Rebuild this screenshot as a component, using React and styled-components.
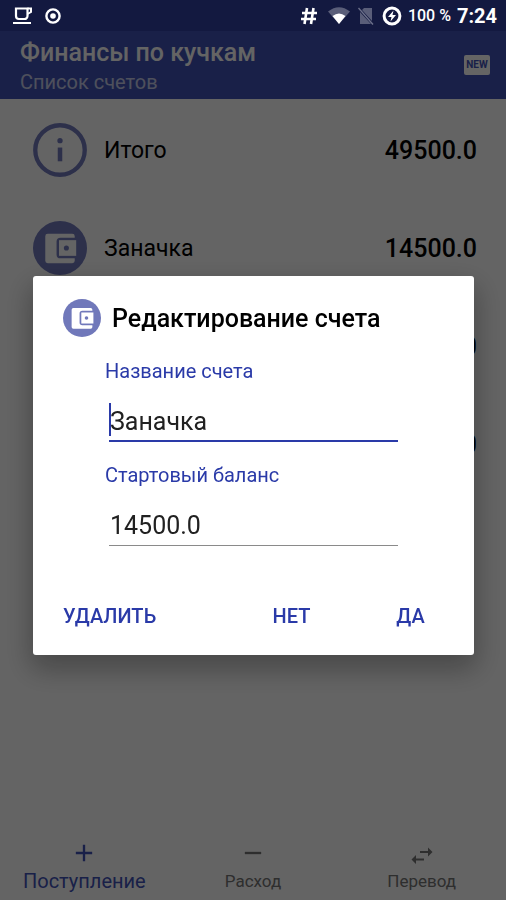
import React, { useState } from 'react'
import styled, { createGlobalStyle } from 'styled-components'
import { MdAdd, MdRemove } from 'react-icons/md'

const GlobalStyle = createGlobalStyle`
  * {
    box-sizing: border-box;
  }
  body {
    margin: 0;
    background: #fafafa;
    color: #000;
    font-family: Roboto, 'Noto Sans', sans-serif;
  }
  button,
  input {
    font-family: inherit;
  }
  svg {
    display: block;
    flex: none;
  }
`

const Page = styled.div`
  display: flex;
  flex-direction: column;
  min-height: 100vh;
`

const StatusBar = styled.div`
  position: relative;
  z-index: 2;
  display: flex;
  gap: 6px;
  height: 31px;
  padding: 0 9px 0 12px;
  background: #131940;
  color: #fff;
`

const StatusGroup = styled.div`
  display: flex;
  flex: ${props => (props.$grow ? 1 : 'none')};
  align-items: center;
  gap: ${props => props.$gap};
`

const Battery = styled.span`
  font-size: 16px;
  font-weight: 500;
`

const Clock = styled.time`
  font-size: 20px;
  font-weight: 700;
`

const AppBar = styled.header`
  display: flex;
  align-items: center;
  justify-content: space-between;
  height: 68px;
  padding: 0 16px 0 20px;
  background: #3f51b5;
  color: #fafafa;
`

const Title = styled.h1`
  margin: 0;
  padding-top: 4px;
  font-size: 25px;
  line-height: 30px;
  font-weight: 500;
`

const Subtitle = styled.p`
  margin: 0;
  font-size: 20px;
  line-height: 28px;
  opacity: 0.7;
`

const NewButton = styled.button`
  width: 26px;
  height: 20px;
  padding: 0;
  border: 0;
  border-radius: 2px;
  background: #fafafa;
  color: #3f51b5;
  font-size: 10px;
  line-height: 20px;
  font-weight: 700;
`

const AccountList = styled.ul`
  flex: 1;
  margin: 0;
  padding: 2px 0 0;
  list-style: none;
`

const AccountRow = styled.li`
  display: flex;
  align-items: center;
  gap: 17px;
  height: 98px;
  padding: 0 29px 0 33px;
  font-size: 23px;
`

const AccountName = styled.span`
  flex: 1;
`

const Amount = styled.span`
  font-size: 25px;
  font-weight: 500;
`

const BottomNav = styled.nav`
  display: flex;
  height: 63px;
`

const NavLink = styled.a`
  display: flex;
  flex: 1;
  flex-direction: column;
  align-items: center;
  padding-top: 2px;
  color: ${props => (props.$active ? '#3f51b5' : '#737373')};
  font-size: ${props => (props.$active ? '20px' : '17px')};
  line-height: 28px;
  text-decoration: none;
`

const Scrim = styled.div`
  position: fixed;
  inset: 0;
  z-index: 1;
  display: flex;
  align-items: center;
  padding: 31px 32px 0 33px;
  background: rgba(0, 0, 0, 0.6);
`

const Dialog = styled.form`
  flex: 1;
  min-width: 0;
  padding: 23px 4px 18px 30px;
  border-radius: 3px;
  background: #fff;
  box-shadow: 0 12px 28px 2px rgba(0, 0, 0, 0.3);
`

const DialogHeader = styled.div`
  display: flex;
  align-items: center;
  gap: 11px;
  height: 38px;
`

const DialogTitle = styled.h2`
  margin: 0;
  font-size: 25px;
  font-weight: 500;
`

const Fields = styled.div`
  padding: 20px 72px 0 42px;
`

const Field = styled.div`
  position: relative;
  display: flex;
  flex-direction: column;
  height: 104px;
`

const Label = styled.label`
  color: #2a3aa8;
  font-size: 20px;
  line-height: 28px;
`

const Input = styled.input`
  min-width: 0;
  height: 46px;
  margin: 11px 0 0 4px;
  padding: 6px 1px 0;
  border: 0;
  border-bottom: ${props =>
    props.$focused ? '2px solid #2a3aa8' : '1px solid #8a8a8a'};
  outline: none;
  background: transparent;
  color: #212121;
  font-size: 25px;
`

const Caret = styled.span`
  position: absolute;
  top: 46px;
  left: 4px;
  width: 2px;
  height: 33px;
  background: #2a3aa8;
`

const Actions = styled.div`
  display: flex;
  align-items: center;
  justify-content: space-between;
  margin-top: 30px;
`

const ActionGroup = styled.div`
  display: flex;
`

const ActionButton = styled.button`
  min-width: ${props => (props.$wide ? '92px' : '119px')};
  height: 42px;
  padding: 0;
  border: 0;
  background: none;
  color: #2a3aa8;
  font-size: 20px;
  font-weight: 500;
`

const InfoIcon = () => (
  <svg width="54" height="54" viewBox="0 0 55 55" fill="none">
    <circle cx="27.5" cy="27.5" r="25.2" stroke="#7078ba" strokeWidth="4.4" />
    <circle cx="27.5" cy="18" r="2.7" fill="#7078ba" />
    <path d="M25.2 25h4.6v14h-4.6z" fill="#7078ba" />
  </svg>
)

const WalletIcon = ({ size, hole = '#fff' }) => (
  <svg width={size} height={size} viewBox="0 0 55 55">
    <circle cx="27.5" cy="27.5" r="27.5" fill="#7078ba" />
    <path
      fill={hole}
      d="M15 13h25a2.5 2.5 0 0 1 2.5 2.5V17H28a4 4 0 0 0-4 4v13a4 4 0 0 0 4 4h14.5v2.5a2.5 2.5 0 0 1-2.5 2.5H15a2.5 2.5 0 0 1-2.5-2.5v-25a2.5 2.5 0 0 1 2.5-2.5z"
    />
    <path fill={hole} d="M26.5 19.5H44v16H26.5z" />
    <circle cx="34" cy="27.5" r="2.6" fill="#7078ba" />
  </svg>
)

const CupIcon = () => (
  <svg width="22" height="18" viewBox="0 0 22 18" fill="none" stroke="#fff">
    <path d="M4 1.5h11.5v7.5a3 3 0 0 1-3 3H7a3 3 0 0 1-3-3z" strokeWidth="2.2" />
    <path d="M15.5 1.5H19v3.5l-3.5 2" strokeWidth="2" />
    <path d="M1 16h18" strokeWidth="2" />
  </svg>
)

const TargetIcon = () => (
  <svg width="16" height="16" viewBox="0 0 16 16">
    <circle cx="8" cy="8" r="6.6" fill="none" stroke="#fff" strokeWidth="2.4" />
    <circle cx="8" cy="8" r="2.8" fill="#fff" />
  </svg>
)

const HashIcon = () => (
  <svg width="20" height="18" viewBox="0 0 20 18" fill="none" stroke="#fff">
    <path d="M7 1 4.5 17M13.5 1 11 17M2 6h15M1 12h15" strokeWidth="2.6" />
  </svg>
)

const WifiIcon = () => (
  <svg width="22" height="17" viewBox="0 0 22 17">
    <path d="M0 4.5Q11-4 22 4.5L11 17z" fill="#5a5e79" />
    <path d="M4.5 9Q11 4 17.5 9L11 17z" fill="#fff" />
  </svg>
)

const NoSimIcon = () => (
  <svg width="16" height="18" viewBox="0 0 16 18">
    <path d="M6 1h8v13L4 3zM2 5l11 12H2z" fill="#5a5e79" />
    <path d="M.5 1 15 17.5" stroke="#6c708a" strokeWidth="1.4" />
  </svg>
)

const ChargeIcon = () => (
  <svg width="20" height="20" viewBox="0 0 20 20">
    <circle cx="10" cy="10" r="7.9" fill="none" stroke="#fff" strokeWidth="3" />
    <path d="M11.5 4.5 6 11h3.5L8.5 15.5 14 9h-3.5z" fill="#fff" />
  </svg>
)

const TransferIcon = () => (
  <svg width="22" height="28" viewBox="0 -5 22 28" fill="currentColor">
    <path d="M9 7H17V3.5L21.5 8 17 12.5V9H9zM13 14.5H5V11L.5 15.5 5 20V16.5h8z" />
  </svg>
)

const accounts = [
  { id: 1, name: 'Итого', amount: '49500.0', total: true },
  { id: 2, name: 'Заначка', amount: '14500.0' },
  { id: 3, amount: '20000.0' },
  { id: 4, amount: '15000.0' },
]

const Account = ({ name, amount, total }) => (
  <AccountRow>
    {total ? <InfoIcon /> : <WalletIcon size={54} hole="#fafafa" />}
    <AccountName>{name}</AccountName>
    <Amount>{amount}</Amount>
  </AccountRow>
)

const EditDialog = () => {
  const [name, setName] = useState('Заначка')
  const [balance, setBalance] = useState('14500.0')

  return (
    <Scrim>
      <Dialog
        role="dialog"
        aria-modal="true"
        aria-labelledby="dialog-title"
        onSubmit={e => e.preventDefault()}
      >
        <DialogHeader>
          <WalletIcon size={38} />
          <DialogTitle id="dialog-title">Редактирование счета</DialogTitle>
        </DialogHeader>
        <Fields>
          <Field>
            <Label htmlFor="name">Название счета</Label>
            <Input
              id="name"
              $focused
              value={name}
              onChange={e => setName(e.target.value)}
            />
            <Caret />
          </Field>
          <Field>
            <Label htmlFor="balance">Стартовый баланс</Label>
            <Input
              id="balance"
              inputMode="decimal"
              value={balance}
              onChange={e => setBalance(e.target.value)}
            />
          </Field>
        </Fields>
        <Actions>
          <ActionButton type="button" $wide>
            УДАЛИТЬ
          </ActionButton>
          <ActionGroup>
            <ActionButton type="button">НЕТ</ActionButton>
            <ActionButton type="submit">ДА</ActionButton>
          </ActionGroup>
        </Actions>
      </Dialog>
    </Scrim>
  )
}

const App = () => (
  <>
    <GlobalStyle />
    <Page>
      <StatusBar>
        <StatusGroup $gap="11px" $grow>
          <CupIcon />
          <TargetIcon />
        </StatusGroup>
        <StatusGroup $gap="8px">
          <HashIcon />
          <WifiIcon />
          <NoSimIcon />
          <ChargeIcon />
        </StatusGroup>
        <StatusGroup $gap="6px">
          <Battery>100 %</Battery>
          <Clock>7:24</Clock>
        </StatusGroup>
      </StatusBar>
      <AppBar>
        <div>
          <Title>Финансы по кучкам</Title>
          <Subtitle>Список счетов</Subtitle>
        </div>
        <NewButton type="button">NEW</NewButton>
      </AppBar>
      <AccountList>
        {accounts.map(account => (
          <Account key={account.id} {...account} />
        ))}
      </AccountList>
      <BottomNav>
        <NavLink href="#income" $active>
          <MdAdd size={28} />
          Поступление
        </NavLink>
        <NavLink href="#expense">
          <MdRemove size={28} />
          Расход
        </NavLink>
        <NavLink href="#transfer">
          <TransferIcon />
          Перевод
        </NavLink>
      </BottomNav>
    </Page>
    <EditDialog />
  </>
)

export default App
